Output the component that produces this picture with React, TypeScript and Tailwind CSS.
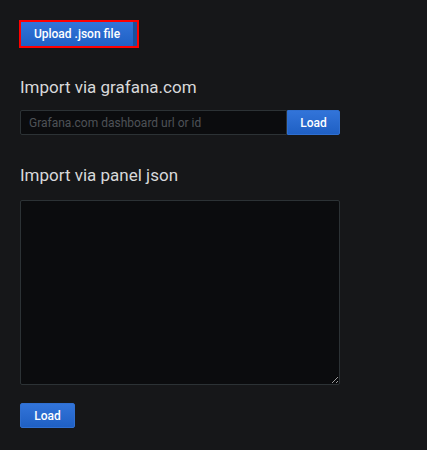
import React from "react";

const btn =
  "h-[25px] rounded-[2px] text-white font-medium text-[12px] leading-none bg-gradient-to-b from-[#3274d9] to-[#1f60c4] border border-[#2f6fd0]";

export default function App() {
  return (
    <div
      className="w-[427px] h-[450px] bg-[#161719] text-[#d8d9da] px-[20px] pt-[20px]"
      style={{ fontFamily: "Roboto, 'Liberation Sans', sans-serif" }}
    >
      <div className="inline-flex border-2 border-[#ff0000] h-[28px] w-[120px] -ml-[1px]">
        <div className="h-full flex-1 flex items-center justify-center bg-gradient-to-b from-[#3274d9] to-[#1f60c4] text-white text-[12px] font-medium">
          Upload .json file
        </div>
        <div className="w-[4px] h-full bg-[#1c4f9c]" />
      </div>

      <h2 className="mt-[28px] text-[17px] leading-[22px] font-normal">Import via grafana.com</h2>
      <div className="mt-[12px] flex w-[320px]">
        <input
          className="h-[25px] flex-1 bg-[#0b0c0e] border border-[#2c3235] rounded-l-[2px] px-[8px] text-[12px] placeholder-[#4e5257] outline-none"
          placeholder="Grafana.com dashboard url or id"
        />
        <button className={`${btn} w-[53px] rounded-l-none`}>Load</button>
      </div>

      <h2 className="mt-[29px] text-[17px] leading-[22px] font-normal">Import via panel json</h2>
      <textarea className="mt-[14px] block w-[320px] h-[185px] bg-[#0b0c0e] border border-[#2c3235] rounded-[2px] outline-none" />
      <button className={`${btn} mt-[18px] w-[55px]`}>Load</button>
    </div>
  );
}
